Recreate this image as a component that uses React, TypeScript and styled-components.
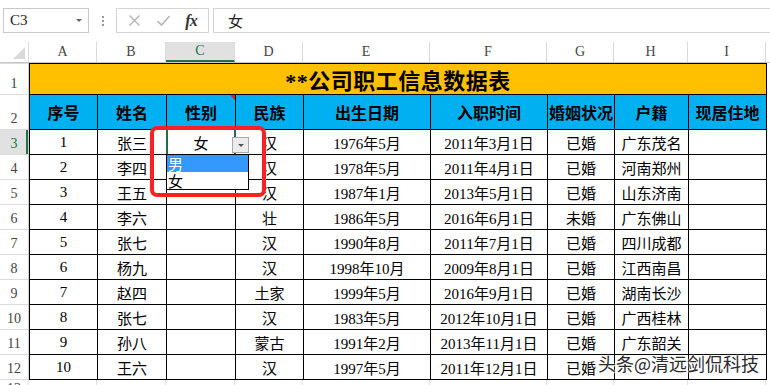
import styled, { createGlobalStyle } from "styled-components";

const GlobalStyle = createGlobalStyle`
  html, body { margin: 0; padding: 0; background: #fff; }
  body {
    width: 770px;
    height: 385px;
    overflow: hidden;
    font-family: "Liberation Serif", "Noto Sans CJK SC", serif;
    color: #000;
  }
`;

const COL_WIDTHS = [67, 68, 68, 67, 126, 116, 66, 73, 77];
const ROW_TEMPLATE = "30px 34px repeat(10, 24px)";
const LETTERS = ["A", "B", "C", "D", "E", "F", "G", "H", "I"];
const HEADERS = ["序号", "姓名", "性别", "民族", "出生日期", "入职时间", "婚姻状况", "户籍", "现居住地"];

const ROWS: string[][] = [
  ["1", "张三", "", "汉", "1976年5月", "2011年3月1日", "已婚", "广东茂名", ""],
  ["2", "李四", "", "汉", "1978年5月", "2011年4月1日", "已婚", "河南郑州", ""],
  ["3", "王五", "", "汉", "1987年1月", "2013年5月1日", "已婚", "山东济南", ""],
  ["4", "李六", "", "壮", "1986年5月", "2016年6月1日", "未婚", "广东佛山", ""],
  ["5", "张七", "", "汉", "1990年8月", "2011年7月1日", "已婚", "四川成都", ""],
  ["6", "杨九", "", "汉", "1998年10月", "2009年8月1日", "已婚", "江西南昌", ""],
  ["7", "赵四", "", "土家", "1999年5月", "2016年9月1日", "已婚", "湖南长沙", ""],
  ["8", "张七", "", "汉", "1983年5月", "2012年10月1日", "已婚", "广西桂林", ""],
  ["9", "孙八", "", "蒙古", "1991年2月", "2013年11月1日", "已婚", "广东韶关", ""],
  ["10", "王六", "", "汉", "1997年5月", "2011年12月1日", "已婚", "", ""],
];

const GREEN = "#217346";

const Page = styled.div`
  position: relative;
  width: 770px;
  height: 385px;
  display: flex;
  flex-direction: column;
  overflow: hidden;
`;

/* formula bar */
const FormulaBar = styled.div`
  display: flex;
  align-items: center;
  height: 25px;
  margin-top: 8px;
`;

const NameBox = styled.div`
  box-sizing: border-box;
  width: 86px;
  height: 25px;
  margin-left: 3px;
  border: 1px solid #c8c8c8;
  display: flex;
  align-items: center;
  justify-content: space-between;
  padding: 0 6px 0 6px;
  font-size: 15px;
  color: #222;
`;

const Caret = styled.span`
  width: 0;
  height: 0;
  border-left: 3px solid transparent;
  border-right: 3px solid transparent;
  border-top: 3px solid #666;
`;

const Dots = styled.div`
  width: 27px;
  display: flex;
  flex-direction: column;
  align-items: center;
  gap: 2px;
  span {
    width: 2px;
    height: 2px;
    background: #9a9a9a;
  }
`;

const FxGroup = styled.div`
  box-sizing: border-box;
  width: 93px;
  height: 25px;
  border: 1px solid #d4d4d4;
  display: flex;
  align-items: center;
  justify-content: space-around;
  padding: 0 4px 0 4px;
`;

const FxText = styled.span`
  font-family: "Liberation Serif", serif;
  font-style: italic;
  font-weight: bold;
  font-size: 16px;
  color: #333;
  letter-spacing: -1px;
`;

const FormulaInput = styled.div`
  box-sizing: border-box;
  flex: 1;
  height: 25px;
  margin-left: 4px;
  border: 1px solid #d4d4d4;
  border-right: none;
  display: flex;
  align-items: center;
  padding-left: 14px;
  font-family: "Noto Sans CJK SC", sans-serif;
  font-size: 15px;
  color: #222;
`;

/* column headers */
const ColumnHeaderRow = styled.div`
  display: flex;
  height: 20px;
  margin-top: 9px;
  border-bottom: 1px solid #c6c6c6;
  box-sizing: content-box;
`;

const Corner = styled.div`
  position: relative;
  box-sizing: border-box;
  width: 29px;
  height: 20px;
  border-right: 1px solid #dadada;
  &::after {
    content: "";
    position: absolute;
    right: 3px;
    bottom: 3px;
    width: 0;
    height: 0;
    border-left: 12px solid transparent;
    border-bottom: 12px solid #dadada;
  }
`;

const ColHead = styled.div<{ $w: number; $active?: boolean }>`
  box-sizing: border-box;
  width: ${(p) => p.$w}px;
  height: 20px;
  display: flex;
  align-items: center;
  justify-content: center;
  font-size: 14px;
  color: ${(p) => (p.$active ? GREEN : "#444")};
  background: ${(p) => (p.$active ? "#e1e1e1" : "#fff")};
  border-right: 1px solid #dadada;
  border-bottom: ${(p) => (p.$active ? `2px solid ${GREEN}` : "none")};
`;

/* body */
const Body = styled.div`
  display: flex;
`;

const RowHeads = styled.div`
  box-sizing: border-box;
  width: 29px;
  display: grid;
  grid-template-rows: ${ROW_TEMPLATE};
  row-gap: 1px;
  padding: 1px 0;
  background: #dcdcdc;
  border-right: 1px solid #d0d0d0;
`;

const RowHead = styled.div<{ $active?: boolean }>`
  display: flex;
  align-items: flex-end;
  justify-content: center;
  padding-bottom: 2px;
  box-sizing: border-box;
  font-size: 14px;
  line-height: 16px;
  color: ${(p) => (p.$active ? GREEN : "#444")};
  background: ${(p) => (p.$active ? "#e1e1e1" : "#fff")};
  box-shadow: ${(p) => (p.$active ? `inset -2px 0 0 ${GREEN}` : "none")};
`;

const Table = styled.div`
  display: grid;
  grid-template-columns: ${COL_WIDTHS.map((w) => `${w}px`).join(" ")};
  grid-template-rows: ${ROW_TEMPLATE};
  gap: 1px;
  background: #000;
  border: 1px solid #000;
`;

const TitleCell = styled.div`
  grid-column: 1 / -1;
  background: #ffc000;
  display: flex;
  align-items: center;
  justify-content: center;
  font-family: "Liberation Serif", "Noto Sans CJK SC", serif;
  font-weight: bold;
  font-size: 22px;
  letter-spacing: 0.5px;
`;

const HeadCell = styled.div`
  position: relative;
  background: #00b0f0;
  display: flex;
  align-items: center;
  justify-content: center;
  font-family: "Noto Sans CJK SC", sans-serif;
  font-weight: bold;
  font-size: 16px;
  white-space: nowrap;
`;

const CommentMark = styled.span`
  position: absolute;
  top: 0;
  right: 0;
  width: 0;
  height: 0;
  border-left: 5px solid transparent;
  border-top: 5px solid #e0201b;
`;

const DataCell = styled.div`
  position: relative;
  background: #fff;
  display: flex;
  align-items: center;
  justify-content: center;
  font-size: 15px;
  white-space: nowrap;
`;

const CellText = styled.span`
  font-family: "Noto Sans CJK SC", sans-serif;
`;

/* dropdown overlay on C3 */
const Selection = styled.span`
  position: absolute;
  left: -1px;
  top: 0;
  width: 70px;
  height: 24px;
  box-sizing: border-box;
  border-left: 2px solid ${GREEN};
  border-right: 2px solid ${GREEN};
`;

const DropButton = styled.span`
  position: absolute;
  left: 65px;
  top: 7px;
  width: 17px;
  height: 16px;
  box-sizing: border-box;
  border: 1px solid #a9a9a9;
  background: #ececec;
  z-index: 4;
  display: flex;
  align-items: center;
  justify-content: center;
  &::after {
    content: "";
    border-left: 3px solid transparent;
    border-right: 3px solid transparent;
    border-top: 3px solid #555;
  }
`;

const DropList = styled.div`
  position: absolute;
  left: -1px;
  top: 24px;
  width: 83px;
  box-sizing: border-box;
  border: 1px solid #000;
  background: #fff;
  z-index: 4;
  display: flex;
  flex-direction: column;
`;

const DropItem = styled.div<{ $hover?: boolean }>`
  height: 17px;
  line-height: 17px;
  padding-left: 1px;
  font-family: "Noto Sans CJK SC", sans-serif;
  font-size: 15px;
  color: ${(p) => (p.$hover ? "#fff" : "#000")};
  background: ${(p) => (p.$hover ? "#3399ff" : "#fff")};
`;

const RedFrame = styled.span`
  position: absolute;
  left: -17px;
  top: -4px;
  width: 116px;
  height: 71px;
  box-sizing: border-box;
  border: 4px solid #ff2121;
  border-radius: 7px;
  z-index: 6;
  pointer-events: none;
`;

/* row 13, cut by the window */
const GhostRow = styled.div`
  display: flex;
  height: 10px;
`;

const GhostCell = styled.div<{ $w: number }>`
  box-sizing: border-box;
  width: ${(p) => p.$w}px;
  border-right: 1px solid #e2e2e2;
  font-size: 14px;
  color: #444;
  text-align: center;
  line-height: 18px;
  overflow: hidden;
`;

const Watermark = styled.div`
  position: absolute;
  left: 598px;
  top: 352px;
  font-family: "Noto Sans CJK SC", sans-serif;
  font-size: 18px;
  line-height: 22px;
  color: #2a2a2a;
  white-space: nowrap;
  text-shadow: 0 0 2px #fff, 0 0 2px #fff, 1px 1px 1px rgba(255, 255, 255, 0.9);
  z-index: 8;
`;

const Cross = () => (
  <svg width="13" height="13" viewBox="0 0 13 13">
    <path d="M1.5 1.5 L11.5 11.5 M11.5 1.5 L1.5 11.5" stroke="#b4b4b4" strokeWidth="1.4" fill="none" />
  </svg>
);

const Check = () => (
  <svg width="15" height="13" viewBox="0 0 15 13">
    <path d="M1.5 7 L5.5 11 L13.5 2" stroke="#b4b4b4" strokeWidth="1.6" fill="none" />
  </svg>
);

const colHeadWidths = [68, 69, 69, 68, 127, 117, 67, 74, 78];

export default function App() {
  return (
    <>
      <GlobalStyle />
      <Page>
        <FormulaBar>
          <NameBox>
            C3
            <Caret />
          </NameBox>
          <Dots>
            <span />
            <span />
            <span />
          </Dots>
          <FxGroup>
            <Cross />
            <Check />
            <FxText>fx</FxText>
          </FxGroup>
          <FormulaInput>女</FormulaInput>
        </FormulaBar>

        <ColumnHeaderRow>
          <Corner />
          {LETTERS.map((l, i) => (
            <ColHead key={l} $w={colHeadWidths[i]} $active={l === "C"}>
              {l}
            </ColHead>
          ))}
        </ColumnHeaderRow>

        <Body>
          <RowHeads>
            {Array.from({ length: 12 }, (_, i) => (
              <RowHead key={i} $active={i === 2}>
                {i + 1}
              </RowHead>
            ))}
          </RowHeads>
          <Table>
            <TitleCell>**公司职工信息数据表</TitleCell>
            {HEADERS.map((h, i) => (
              <HeadCell key={h}>
                {h}
                {i === 2 && <CommentMark />}
              </HeadCell>
            ))}
            {ROWS.map((row, r) =>
              row.map((v, c) =>
                r === 0 && c === 2 ? (
                  <DataCell key={`${r}-${c}`}>
                    <CellText>女</CellText>
                    <Selection />
                    <DropButton />
                    <DropList>
                      <DropItem $hover>男</DropItem>
                      <DropItem>女</DropItem>
                    </DropList>
                    <RedFrame />
                  </DataCell>
                ) : (
                  <DataCell key={`${r}-${c}`}>{v}</DataCell>
                )
              )
            )}
          </Table>
        </Body>

        <GhostRow>
          <GhostCell $w={29}>13</GhostCell>
          {colHeadWidths.map((w, i) => (
            <GhostCell key={i} $w={w} />
          ))}
        </GhostRow>

        <Watermark>头条@清远剑侃科技</Watermark>
      </Page>
    </>
  );
}
